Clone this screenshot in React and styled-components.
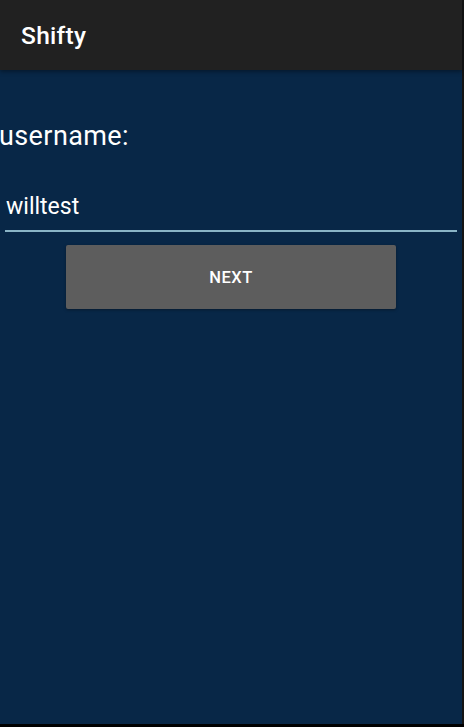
import { useState } from "react";
import styled, { createGlobalStyle } from "styled-components";

const GlobalStyle = createGlobalStyle`
  html, body {
    margin: 0;
    padding: 0;
    height: 100%;
    background: #000;
  }
  #root {
    height: 100%;
  }
`;

const App = () => {
  const [username, setUsername] = useState("willtest");

  return (
    <>
      <GlobalStyle />
      <StyledScreen>
        <Toolbar>
          <h1 className="title">Shifty</h1>
        </Toolbar>
        <Content>
          <Label htmlFor="username">username:</Label>
          <Field
            id="username"
            value={username}
            onChange={(e) => setUsername(e.target.value)}
          />
          <NextButton>NEXT</NextButton>
        </Content>
      </StyledScreen>
    </>
  );
};

const StyledScreen = styled.div`
  height: 724px;
  width: 462px;
  display: flex;
  flex-direction: column;
  background: #082747;
  font-family: Roboto, "Noto Sans", sans-serif;
  border-right: 2px solid #141414;
`;

const Toolbar = styled.header`
  height: 70px;
  flex-shrink: 0;
  background: #212121;
  display: flex;
  align-items: center;
  padding: 0 21px;
  box-shadow: 0 2px 4px rgba(0, 0, 0, 0.35);
  position: relative;
  z-index: 1;

  .title {
    margin: 0;
    color: #fff;
    font-size: 24.5px;
    font-weight: 500;
    letter-spacing: 0.3px;
  }
`;

const Content = styled.main`
  display: flex;
  flex-direction: column;
  padding-top: 51px;
`;

const Label = styled.label`
  color: #fff;
  font-size: 27px;
  line-height: 30px;
  letter-spacing: 0.4px;
  margin-left: -1px;
`;

const Field = styled.input`
  margin: 39px 5px 0 5px;
  width: 452px;
  box-sizing: border-box;
  background: transparent;
  border: none;
  border-bottom: 2px solid #8ab4c6;
  outline: none;
  color: #fff;
  font-family: inherit;
  font-size: 23px;
  padding: 0 1px 8px;
  height: 42px;
`;

const NextButton = styled.button`
  align-self: flex-start;
  margin: 13px 0 0 66px;
  width: 330px;
  height: 64px;
  background: #5d5d5d;
  color: #fff;
  border: none;
  border-radius: 2px;
  box-shadow: 0 1px 3px rgba(0, 0, 0, 0.35);
  font-family: inherit;
  font-size: 16.5px;
  font-weight: 500;
  letter-spacing: 0.5px;
`;

export default App;
